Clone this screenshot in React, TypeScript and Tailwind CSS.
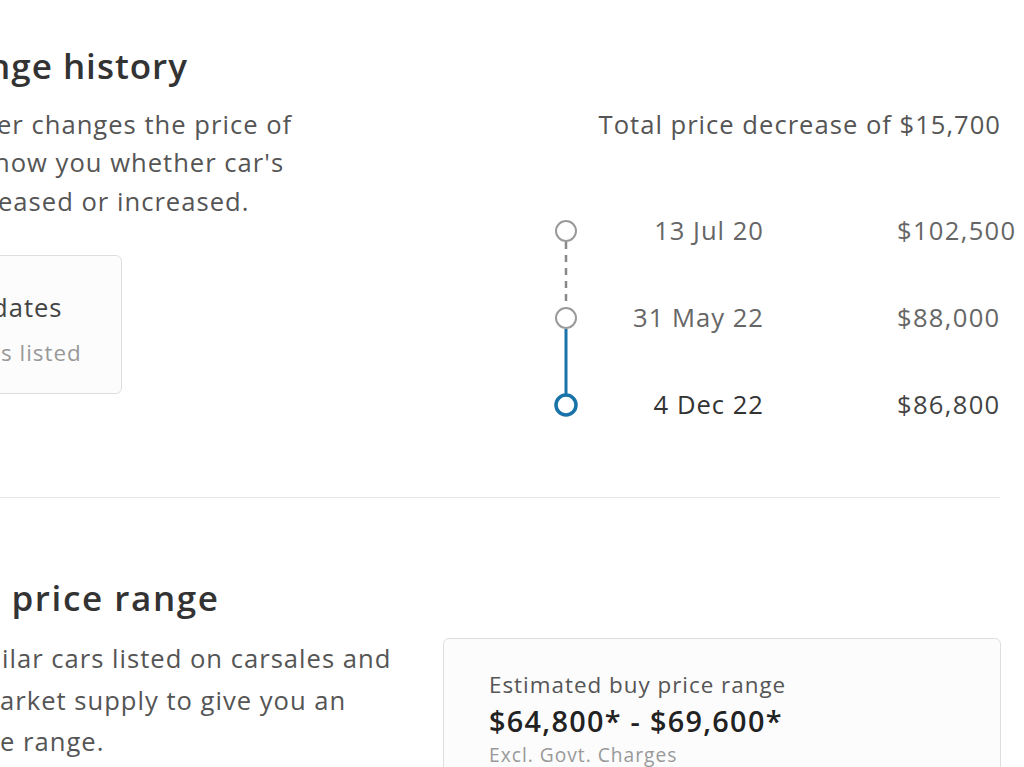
import React from "react";

const timeline = [
  { date: "13 Jul 20", price: "$102,500", current: false },
  { date: "31 May 22", price: "$88,000", current: false },
  { date: "4 Dec 22", price: "$86,800", current: true },
];

function TimelineRail() {
  return (
    <svg width="24" height="200" viewBox="0 0 24 200" className="shrink-0">
      <line x1="12" y1="24" x2="12" y2="89" stroke="#888" strokeWidth="2.5" strokeDasharray="7 6" />
      <line x1="12" y1="111" x2="12" y2="176" stroke="#1a73a8" strokeWidth="3" />
      <circle cx="12" cy="13" r="10" fill="#fff" stroke="#9a9a9a" strokeWidth="2" />
      <circle cx="12" cy="100" r="10" fill="#fff" stroke="#9a9a9a" strokeWidth="2" />
      <circle cx="12" cy="187" r="10" fill="#fff" stroke="#1a73a8" strokeWidth="3.5" />
    </svg>
  );
}

export default function App() {
  return (
    <div className="h-[767px] w-[1024px] overflow-hidden bg-white font-['Open_Sans',sans-serif] tracking-[1px] text-[#333]">
      {/* Price change history */}
      <div className="flex justify-between pr-[24px] pt-[42px]">
        <div className="w-[440px] overflow-hidden">
          <h2 className="ml-[-12px] whitespace-nowrap text-[35px] font-semibold leading-[48px] text-[#333]">
            nge history
          </h2>
          <div className="mt-[16px] whitespace-nowrap text-[25.6px] leading-[38.4px] text-[#555]">
            <p className="ml-[-3px]">er changes the price of</p>
            <p className="ml-[-6px]">how you whether car's</p>
            <p className="ml-[-2px]">eased or increased.</p>
          </div>
          <div className="ml-[-20px] mt-[34px] w-[142px] overflow-hidden rounded-[6px] border border-[#dedede] bg-[#fcfcfc] pb-[23px] pl-[20px] pt-[33px]">
            <p className="ml-[-9px] whitespace-nowrap text-[25.6px] leading-[38px] text-[#444]">dates</p>
            <p className="mt-[9px] whitespace-nowrap text-[22.4px] leading-[34px] text-[#999]">s listed</p>
          </div>
        </div>

        <div className="w-[446px]">
          <p className="mr-[-1px] mt-[64px] text-right text-[25.6px] leading-[38px] text-[#555]">
            Total price decrease of $15,700
          </p>
          <div className="mt-[74px] flex items-start">
            <TimelineRail />
            <div className="grid grid-cols-[186px_1fr] grid-rows-[26px_26px_26px] gap-x-[133px] gap-y-[61px] text-[25.6px]">
              {timeline.map((row) => (
                <React.Fragment key={row.date}>
                  <span
                    className={`flex items-center justify-end whitespace-nowrap leading-[26px] ${
                      row.current ? "text-[#333]" : "text-[#666]"
                    }`}
                  >
                    {row.date}
                  </span>
                  <span
                    className={`flex items-center whitespace-nowrap leading-[26px] tracking-[1.3px] ${
                      row.current ? "text-[#444]" : "text-[#666]"
                    }`}
                  >
                    {row.price}
                  </span>
                </React.Fragment>
              ))}
            </div>
          </div>
        </div>
      </div>

      <div className="mr-[24px] mt-[79px] h-px bg-[#e6e6e6]" />

      {/* Price range */}
      <div className="pr-[23px]">
        <h2 className="ml-[-21px] mt-[76px] whitespace-nowrap text-[35px] font-semibold leading-[48px] tracking-[1.6px] text-[#333]">
          e price range
        </h2>
        <div className="mt-[16px] flex items-start justify-between">
          <div className="whitespace-nowrap text-[25.6px] leading-[41.6px] text-[#555]">
            <p className="ml-[2px]">ilar cars listed on carsales and</p>
            <p>arket supply to give you an</p>
            <p>e range.</p>
          </div>
          <div className="w-[558px] rounded-[6px] border border-[#dedede] bg-[#fcfcfc] pb-[20px] pl-[45px] pt-[29px]">
            <p className="text-[22.4px] leading-[34px] text-[#555]">Estimated buy price range</p>
            <p className="text-[28.8px] font-semibold leading-[38px] tracking-[1.3px] text-[#222]">$64,800* - $69,600*</p>
            <p className="text-[19.2px] leading-[30px] text-[#999]">Excl. Govt. Charges</p>
          </div>
        </div>
      </div>
    </div>
  );
}
